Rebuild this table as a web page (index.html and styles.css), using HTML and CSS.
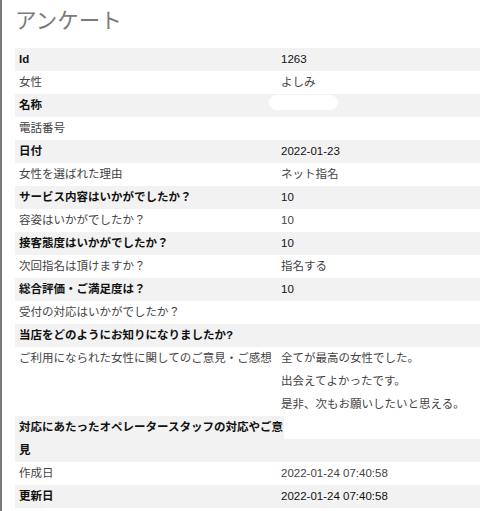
FILE: index.html
```html
<!DOCTYPE html>
<html lang="ja">
<head>
<meta charset="utf-8">
<title>アンケート</title>
<link rel="stylesheet" href="styles.css">
</head>
<body>
<div class="page">
  <h1 class="title">アンケート</h1>
  <div class="survey">
    <div class="row odd"><div class="label">Id</div><div class="value">1263</div></div>
    <div class="row"><div class="label">女性</div><div class="value">よしみ</div></div>
    <div class="row odd"><div class="label">名称</div><div class="value"><span class="blank"></span></div></div>
    <div class="row"><div class="label">電話番号</div><div class="value"></div></div>
    <div class="row odd"><div class="label">日付</div><div class="value">2022-01-23</div></div>
    <div class="row"><div class="label">女性を選ばれた理由</div><div class="value">ネット指名</div></div>
    <div class="row odd"><div class="label">サービス内容はいかがでしたか？</div><div class="value">10</div></div>
    <div class="row"><div class="label">容姿はいかがでしたか？</div><div class="value">10</div></div>
    <div class="row odd"><div class="label">接客態度はいかがでしたか？</div><div class="value">10</div></div>
    <div class="row"><div class="label">次回指名は頂けますか？</div><div class="value">指名する</div></div>
    <div class="row odd"><div class="label">総合評価・ご満足度は？</div><div class="value">10</div></div>
    <div class="row"><div class="label">受付の対応はいかがでしたか？</div><div class="value"></div></div>
    <div class="row odd"><div class="label">当店をどのようにお知りになりましたか?</div><div class="value"></div></div>
    <div class="row"><div class="label">ご利用になられた女性に関してのご意見・ご感想</div><div class="value">全てが最高の女性でした。<br>出会えてよかったです。<br>是非、次もお願いしたいと思える。</div></div>
    <div class="row odd wrap"><div class="label">対応にあたったオペレータースタッフの対応やご意見</div><div class="value"></div></div>
    <div class="row"><div class="label">作成日</div><div class="value">2022-01-24 07:40:58</div></div>
    <div class="row odd"><div class="label">更新日</div><div class="value">2022-01-24 07:40:58</div></div>
  </div>
</div>
</body>
</html>
```
FILE: styles.css
```css
html, body {
  margin: 0;
  padding: 0;
  background: #fff;
}
body {
  font-family: "Liberation Sans", "Noto Sans CJK JP", sans-serif;
  font-size: 11.5px;
  color: #444;
}
.page {
  border-left: 2px solid #7a7a7a;
  padding-left: 13px;
  min-height: 511px;
  box-sizing: border-box;
}
.title {
  margin: 0 0 10px;
  font-size: 21.5px;
  line-height: 38px;
  height: 38px;
  font-weight: normal;
  color: #7b7b7b;
  font-family: "Noto Sans CJK JP", sans-serif;
}
.survey {
  display: flex;
  flex-direction: column;
}
.row {
  display: grid;
  grid-template-columns: 262px 1fr;
  line-height: 23px;
  min-height: 23px;
}
.row.odd {
  background: #f2f2f2;
  color: #111;
}
.row.odd .label {
  font-weight: bold;
}
.label {
  padding-left: 4px;
}
.value {
  padding-left: 4px;
}
.blank {
  display: block;
  width: 69px;
  height: 15px;
  margin: 1px 0 0 -12px;
  border-radius: 8px;
  background: #fff;
}
.row.wrap {
  background: #fff;
  grid-template-columns: 269px 1fr;
}
.row.wrap .label {
  background: #f2f2f2;
}
.row.wrap .value {
  align-self: end;
  height: 23px;
  margin-left: -7px;
  background: #f2f2f2;
}
```
